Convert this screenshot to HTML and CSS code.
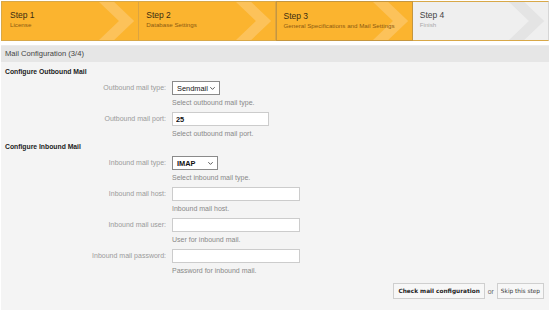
FILE: index.html
```html
<!DOCTYPE html>
<html lang="en">
  <head>
    <meta charset="UTF-8" />
    <title>Installer - Mail Configuration</title>
    <link rel="stylesheet" href="styles.css">
  </head>
  <body>
    <div class="steps">
      <div class="step done">
        <div class="step-title">Step 1</div>
        <div class="step-desc">License</div>
        <svg class="chevron" viewBox="0 0 40 40"><polygon points="0,0 16,0 37,20 16,40 0,40 21,20" /></svg>
      </div>
      <div class="step done">
        <div class="step-title">Step 2</div>
        <div class="step-desc">Database Settings</div>
        <svg class="chevron" viewBox="0 0 40 40"><polygon points="0,0 16,0 37,20 16,40 0,40 21,20" /></svg>
      </div>
      <div class="step done active">
        <div class="step-title">Step 3</div>
        <div class="step-desc">General Specifications and Mail Settings</div>
        <svg class="chevron" viewBox="0 0 40 40"><polygon points="0,0 16,0 37,20 16,40 0,40 21,20" /></svg>
      </div>
      <div class="step">
        <div class="step-title">Step 4</div>
        <div class="step-desc">Finish</div>
        <svg class="chevron" viewBox="0 0 40 40"><polygon points="0,0 16,0 37,20 16,40 0,40 21,20" /></svg>
      </div>
    </div>

    <div class="panel">
      <div class="panel-head">Mail Configuration (3/4)</div>
      <div class="panel-body">
        <h3>Configure Outbound Mail</h3>
        <div class="field">
          <label>Outbound mail type:</label>
          <div class="control">
            <span class="select sel-out">Sendmail
              <svg viewBox="0 0 8 8"><polyline points="1.5,2.5 4,5 6.5,2.5" /></svg>
            </span>
            <div class="hint">Select outbound mail type.</div>
          </div>
        </div>
        <div class="field">
          <label>Outbound mail port:</label>
          <div class="control">
            <input type="text" class="small" value="25" />
            <div class="hint">Select outbound mail port.</div>
          </div>
        </div>

        <h3>Configure Inbound Mail</h3>
        <div class="field">
          <label>Inbound mail type:</label>
          <div class="control">
            <span class="select sel-in">IMAP
              <svg viewBox="0 0 8 8"><polyline points="1.5,2.5 4,5 6.5,2.5" /></svg>
            </span>
            <div class="hint">Select inbound mail type.</div>
          </div>
        </div>
        <div class="field">
          <label>Inbound mail host:</label>
          <div class="control">
            <input type="text" />
            <div class="hint">Inbound mail host.</div>
          </div>
        </div>
        <div class="field">
          <label>Inbound mail user:</label>
          <div class="control">
            <input type="text" />
            <div class="hint">User for inbound mail.</div>
          </div>
        </div>
        <div class="field">
          <label>Inbound mail password:</label>
          <div class="control">
            <input type="password" />
            <div class="hint">Password for inbound mail.</div>
          </div>
        </div>

        <div class="actions">
          <button class="primary">Check mail configuration</button>
          <span class="or">or</span>
          <button>Skip this step</button>
        </div>
      </div>
    </div>
  </body>
</html>
```

FILE: styles.css
```css
body {
  font-family: "Liberation Sans", Arial, sans-serif;
  margin: 1px;
  background: #fff;
  color: #333;
}
.steps {
  display: flex;
  height: 40px;
  border: 1px solid #d8a848;
  border-right-color: #d6d6d6;
  box-sizing: border-box;
}
.step {
  flex: 1;
  position: relative;
  overflow: hidden;
  background: #efefef;
  padding: 8px 7px;
  box-sizing: border-box;
}
.step:first-child {
  padding-left: 8px;
}
.step.done {
  background: #fbb42f;
  border-right: 1px solid #dca440;
}
.step.active {
  border: 1px solid #c49640;
  margin: -1px 0;
  padding-top: 9px;
}
.step-title {
  position: relative;
  z-index: 1;
  font-size: 8.5px;
  line-height: 10px;
  color: #3a2c10;
}
.step-desc {
  position: relative;
  z-index: 1;
  font-size: 6.2px;
  line-height: 8px;
  margin-top: 1px;
  color: #8c5a10;
}
.step:not(.done) .step-title {
  color: #444;
}
.step:not(.done) .step-desc {
  color: #aaa;
}
.chevron {
  position: absolute;
  right: 1px;
  top: 0;
  width: 38px;
  height: 38px;
}
.chevron polygon {
  fill: #fcc25a;
}
.step:not(.done) .chevron polygon {
  fill: #e4e4e4;
}
.panel {
  margin-top: 4px;
  background: #f4f4f4;
  height: 265px;
  box-sizing: border-box;
}
.panel-head {
  background: #e6e6e6;
  font-size: 7.6px;
  line-height: 16px;
  height: 16px;
  padding: 0 4px;
  color: #444;
  border-top: 1px solid #ececec;
}
.panel-body {
  padding: 6px 4px 4px;
}
h3 {
  font-size: 6.8px;
  line-height: 8px;
  font-weight: bold;
  margin: 0 0 5px;
  color: #222;
}
.field {
  display: flex;
  gap: 6px;
  margin-bottom: 5px;
}
.field label {
  width: 161px;
  text-align: right;
  font-size: 7px;
  line-height: 8px;
  color: #9a9a9a;
  padding-top: 3px;
}
.control {
  display: flex;
  flex-direction: column;
  align-items: flex-start;
}
.hint {
  font-size: 7px;
  line-height: 8px;
  color: #888;
  margin-top: 4px;
}
.select {
  display: flex;
  align-items: center;
  justify-content: space-between;
  font-size: 7.4px;
  height: 14px;
  padding: 0 3px 0 4px;
  border: 1px solid #8a8a8a;
  background: #fff;
  color: #111;
  box-sizing: border-box;
}
.select svg {
  width: 7px;
  height: 7px;
  fill: none;
  stroke: #444;
  stroke-width: 1;
}
.sel-out {
  width: 48px;
}
.sel-in {
  width: 46px;
  font-weight: bold;
}
input {
  font-family: "Liberation Sans", Arial, sans-serif;
  font-size: 7.4px;
  height: 14px;
  width: 128px;
  padding: 0 3px;
  border: 1px solid #ccc;
  box-sizing: border-box;
  background: #fff;
  color: #111;
  font-weight: bold;
}
input.small {
  width: 97px;
}
.actions {
  display: flex;
  justify-content: flex-end;
  align-items: center;
  gap: 3px;
  margin-top: 8px;
  padding-right: 1px;
}
button {
  font-family: "DejaVu Sans", Verdana, sans-serif;
  font-size: 5.8px;
  height: 16px;
  padding: 0 3px;
  background: #f7f7f7;
  border: 1px solid #cfcfcf;
  color: #333;
}
button.primary {
  font-weight: bold;
  color: #222;
  padding: 0 4px;
}
.or {
  font-size: 6.8px;
  color: #666;
}
```
